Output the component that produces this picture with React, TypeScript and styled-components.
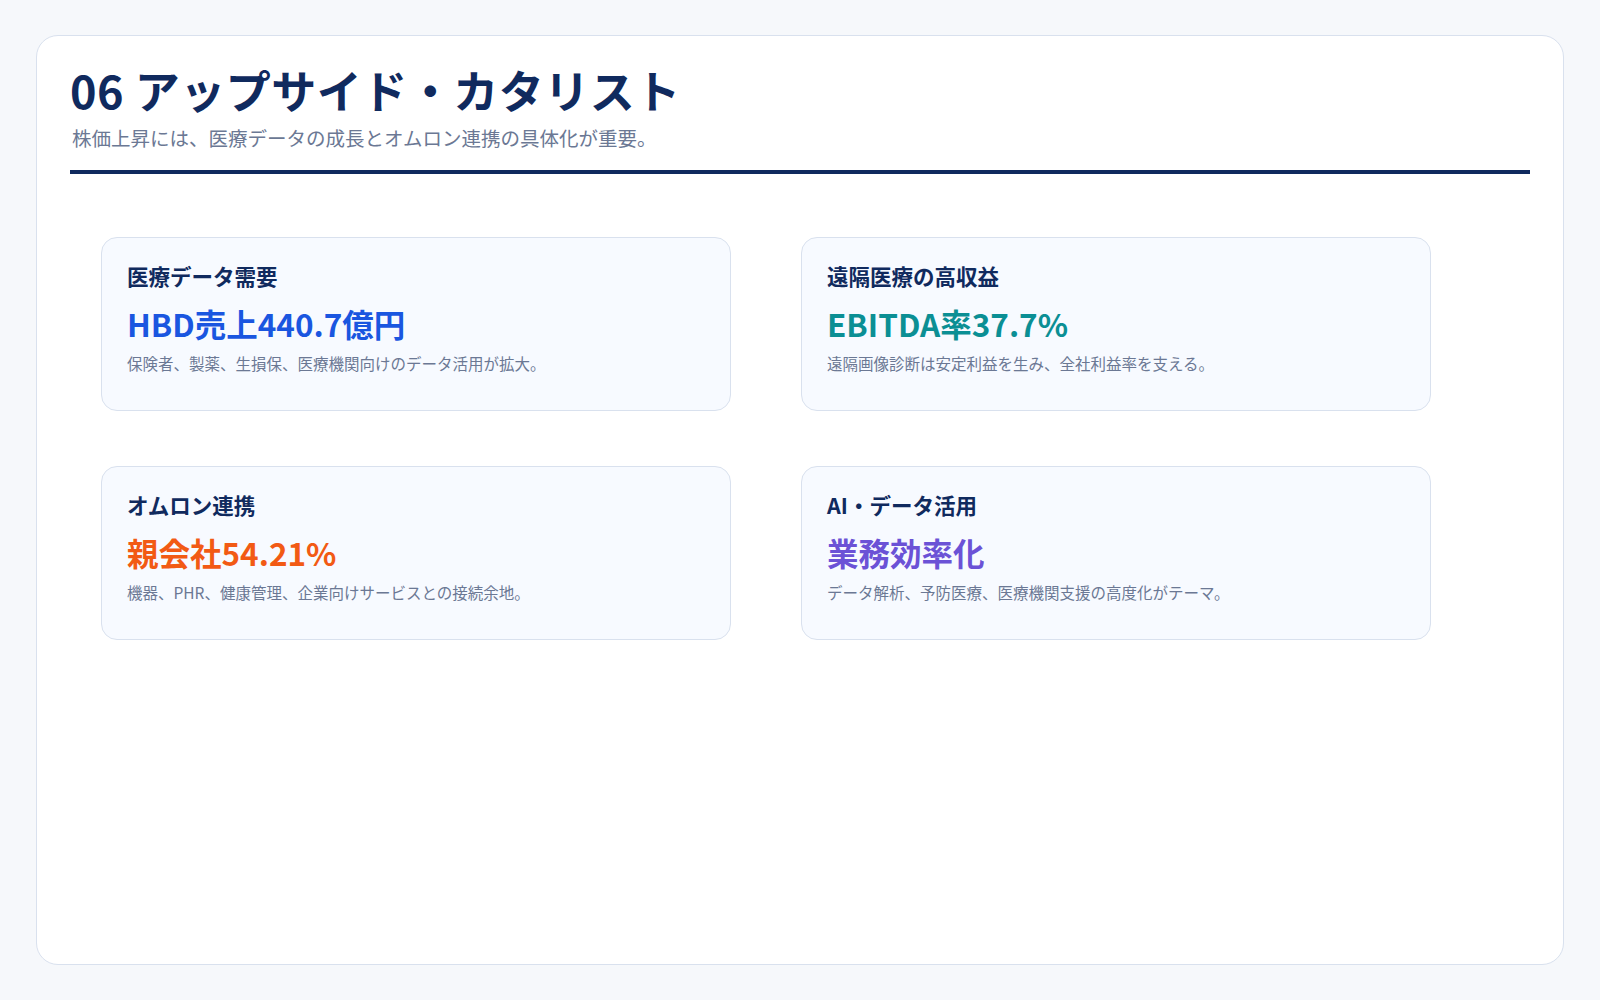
import styled, { createGlobalStyle } from "styled-components";

const Global = createGlobalStyle`
  body {
    margin: 0;
    background: #f6f8fb;
    font-family: "Noto Sans CJK JP", "Noto Sans", sans-serif;
  }
`;

const Page = styled.div`
  padding: 35px 36px;
  height: 1000px;
  box-sizing: border-box;
`;

const Panel = styled.div`
  height: 930px;
  box-sizing: border-box;
  background: #fff;
  border: 1.5px solid #d9e1ee;
  border-radius: 22px;
  padding: 26px 33px;
`;

const Title = styled.h1`
  margin: 0;
  font-size: 45px;
  font-weight: 700;
  color: #102a5e;
  line-height: 56px;
  letter-spacing: 0.5px;
`;

const Sub = styled.p`
  margin: 6px 0 0 2px;
  font-size: 19.5px;
  color: #6b7894;
  line-height: 28px;
`;

const Rule = styled.div`
  height: 4px;
  background: #102a5e;
  margin-top: 18px;
`;

const Grid = styled.div`
  display: grid;
  grid-template-columns: 630px 630px;
  column-gap: 70px;
  row-gap: 55px;
  padding: 63px 31px 0;
`;

const Card = styled.div`
  height: 174px;
  box-sizing: border-box;
  background: #f7faff;
  border: 1.5px solid #d9e1ee;
  border-radius: 16px;
  padding: 22px 25px;
`;

const CardTitle = styled.div`
  font-size: 21.5px;
  font-weight: 700;
  color: #102a5e;
  line-height: 32px;
`;

const Value = styled.div<{ $c: string }>`
  font-size: 31.5px;
  font-weight: 700;
  color: ${(p) => p.$c};
  line-height: 42px;
  margin-top: 10px;
`;

const Desc = styled.div`
  font-size: 15.5px;
  color: #6b7894;
  line-height: 22px;
  margin-top: 8px;
`;

const cards = [
  { t: "医療データ需要", v: "HBD売上440.7億円", c: "#1a56e0", d: "保険者、製薬、生損保、医療機関向けのデータ活用が拡大。" },
  { t: "遠隔医療の高収益", v: "EBITDA率37.7%", c: "#0b8f94", d: "遠隔画像診断は安定利益を生み、全社利益率を支える。" },
  { t: "オムロン連携", v: "親会社54.21%", c: "#f25a14", d: "機器、PHR、健康管理、企業向けサービスとの接続余地。" },
  { t: "AI・データ活用", v: "業務効率化", c: "#6b52d6", d: "データ解析、予防医療、医療機関支援の高度化がテーマ。" },
];

export default function App() {
  return (
    <>
      <Global />
      <Page>
        <Panel>
          <Title>06 アップサイド・カタリスト</Title>
          <Sub>株価上昇には、医療データの成長とオムロン連携の具体化が重要。</Sub>
          <Rule />
          <Grid>
            {cards.map((c) => (
              <Card key={c.t}>
                <CardTitle>{c.t}</CardTitle>
                <Value $c={c.c}>{c.v}</Value>
                <Desc>{c.d}</Desc>
              </Card>
            ))}
          </Grid>
        </Panel>
      </Page>
    </>
  );
}
